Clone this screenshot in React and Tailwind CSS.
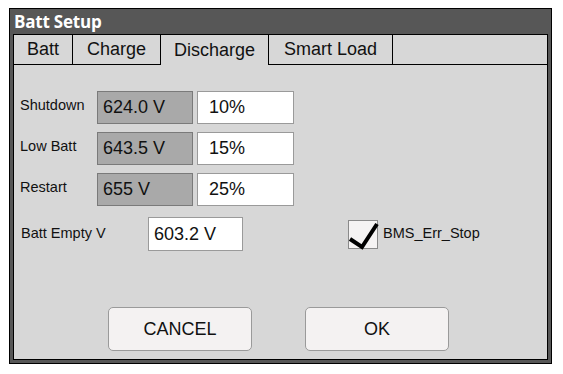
const tabs = [
  { label: "Batt", w: "w-[59px]" },
  { label: "Charge", w: "w-[88px]" },
  { label: "Discharge", w: "w-[108px]", active: true },
  { label: "Smart Load", w: "w-[124px]" },
];

const rows = [
  { label: "Shutdown", volt: "624.0 V", pct: "10%" },
  { label: "Low Batt", volt: "643.5 V", pct: "15%" },
  { label: "Restart", volt: "655 V", pct: "25%" },
];

function Tab({ label, w, active }) {
  return (
    <div
      className={`${w} h-[30px] flex items-center justify-center border-r border-black text-[18px] text-[#111] ${
        active ? "" : "border-b"
      }`}
    >
      {label}
    </div>
  );
}

export default function App() {
  return (
    <div className="w-[563px] h-[374px] bg-white pt-[8px] pl-[9px] font-['Liberation_Sans',Arial,sans-serif]">
      <div className="w-[543px] h-[356px] border border-black bg-[#575757] flex flex-col">
        <div className="h-[25px] flex items-center pl-[4px] text-white text-[17px] font-bold font-['Open_Sans',sans-serif] tracking-[-0.2px]">
          Batt Setup
        </div>
        <div className="mx-[3px] mb-[3px] flex-1 border border-black bg-[#d7d7d7] flex flex-col">
          <div className="flex">
            {tabs.map((t) => (
              <Tab key={t.label} {...t} />
            ))}
            <div className="flex-1 h-[30px] border-b border-black" />
          </div>

          <div className="flex flex-col pt-[26px] pl-[6px] text-[#111]">
            <div className="flex flex-col gap-[8px]">
              {rows.map((r) => (
                <div key={r.label} className="flex items-center">
                  <div className="w-[77px] text-[14.5px] -mt-[3px]">{r.label}</div>
                  <div className="w-[96px] h-[33px] bg-[#a9a9a9] border border-[#7a7a7a] flex items-center pl-[5px] text-[18px]">
                    {r.volt}
                  </div>
                  <div className="ml-[4px] w-[97px] h-[33px] bg-white border border-[#9a9a9a] flex items-center pl-[11px] text-[18px]">
                    {r.pct}
                  </div>
                </div>
              ))}
            </div>

            <div className="flex items-center mt-[11px]">
              <div className="w-[128px] pl-[1px] text-[14.5px] -mt-[1px]">Batt Empty V</div>
              <div className="w-[95px] h-[34px] bg-white border border-[#9a9a9a] flex items-center pl-[5px] text-[18px]">
                603.2 V
              </div>
              <div className="ml-[105px] flex items-center">
                <div className="relative w-[30px] h-[29px] bg-[#f5f3f3] border border-[#8a8a8a]">
                  <svg className="absolute -left-[1px] -top-[1px]" width="32" height="30" viewBox="0 0 32 30">
                    <path d="M2 19 L14 27 L29 4" fill="none" stroke="#000" strokeWidth="4" strokeLinejoin="miter" />
                  </svg>
                </div>
                <span className="ml-[5px] text-[14.5px]">BMS_Err_Stop</span>
              </div>
            </div>

            <div className="flex ml-[88px] mt-[56px] gap-[53px]">
              <button className="w-[144px] h-[44px] bg-[#f4f2f2] border border-[#9a9a9a] rounded-[5px] text-[18px] text-[#111]">
                CANCEL
              </button>
              <button className="w-[144px] h-[44px] bg-[#f4f2f2] border border-[#9a9a9a] rounded-[5px] text-[18px] text-[#111]">
                OK
              </button>
            </div>
          </div>
        </div>
      </div>
    </div>
  );
}
